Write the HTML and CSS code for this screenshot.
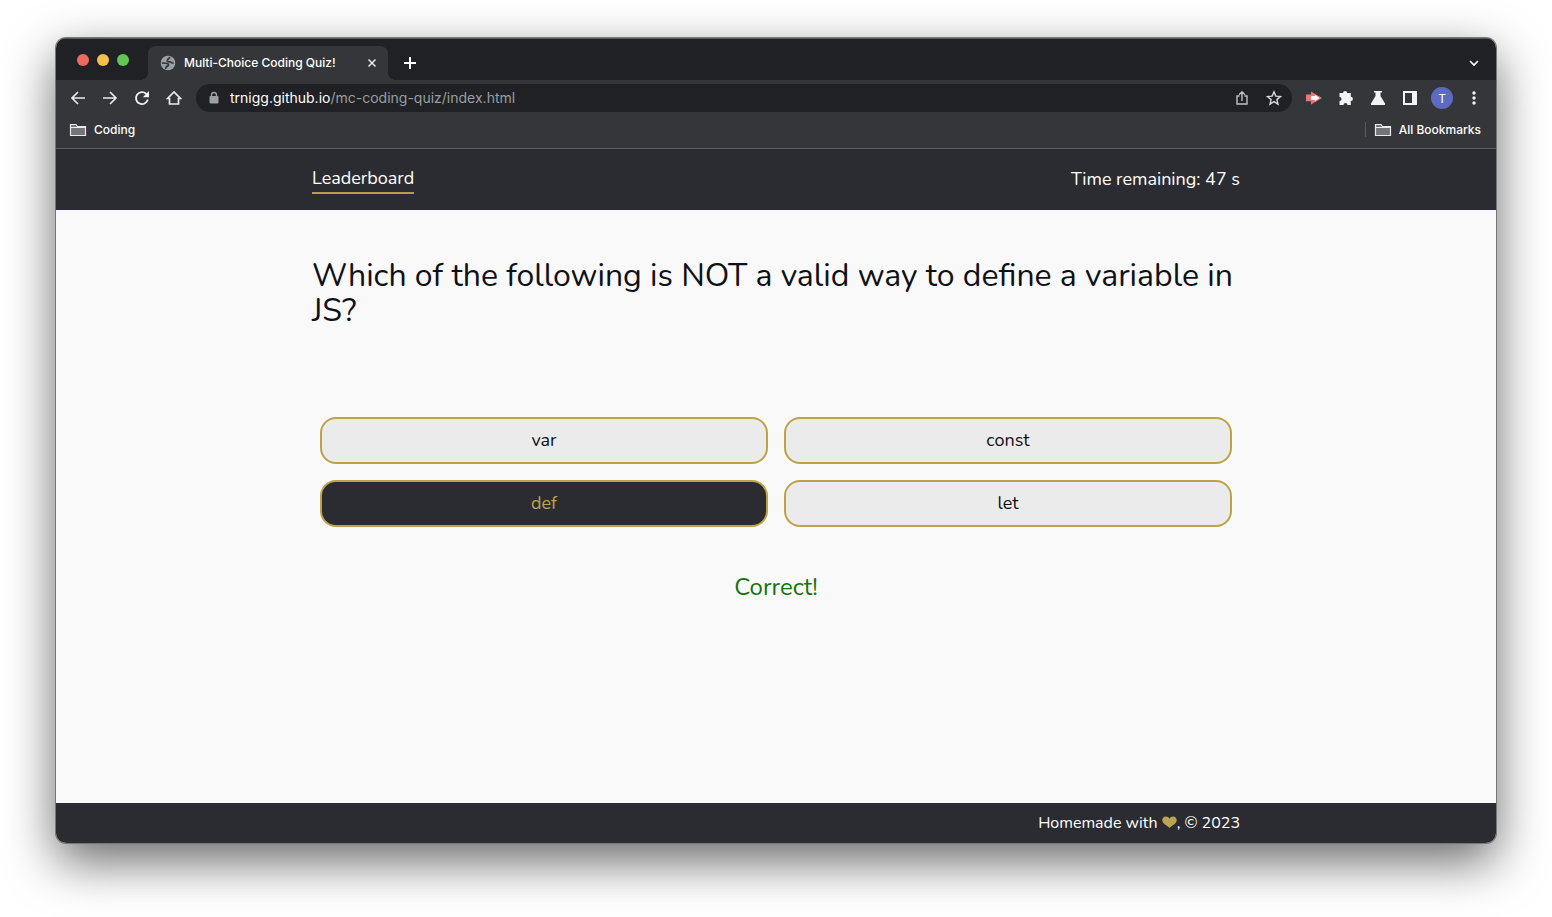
FILE: index.html
```html
<!DOCTYPE html>
<html lang="en">
<head>
<meta charset="utf-8">
<meta name="viewport" content="width=device-width, initial-scale=1">
<title>Multi-Choice Coding Quiz!</title>
<link rel="stylesheet" href="styles.css">
</head>
<body>
<div class="window">
  <div class="tabstrip">
    <div class="lights"><span class="light close"></span><span class="light minimise"></span><span class="light maximise"></span></div>
    <div class="tab">
      <svg class="globe" width="16" height="16" viewBox="0 0 16 16"><circle cx="8" cy="8" r="7.300" fill="#9aa0a6"/><path d="M9.800 1.800C9.500 4 7.800 3.500 7.300 5.200 6.800 6.600 8.500 7 9.800 6.800c1.600-.2 1.400 1.700 3.800 1.400M1.800 8.200C4 7.600 5.200 8.300 7.300 8.600c2 .4 1.200 2.400-.3 2.800-1.300.4-.6 1.600-1.800 2.400" fill="none" stroke="#35363a" stroke-width="1.700"/></svg>
      <span class="tab-title">Multi-Choice Coding Quiz!</span>
      <button class="icon-btn small" aria-label="Close tab"><svg width="16" height="16" viewBox="0 0 16 16"><path d="m4.5 4.5 7 7m0-7-7 7" stroke="#e8eaed" stroke-width="1.5"/></svg></button>
    </div>
    <button class="icon-btn new-tab" aria-label="New tab"><svg width="16" height="16" viewBox="0 0 16 16"><path d="M8 2v12M2 8h12" stroke="#fff" stroke-width="2"/></svg></button>
    <button class="icon-btn tab-search" aria-label="Search tabs"><svg width="16" height="16" viewBox="0 0 16 16"><path d="m4 6 4 4 4-4" fill="none" stroke="#fff" stroke-width="1.6"/></svg></button>
  </div>

  <div class="toolbar">
    <button class="icon-btn" aria-label="Back"><svg width="16" height="16" viewBox="0 0 16 16"><path d="M15 8H2m6-6L2 8l6 6" fill="none" stroke="#e8eaed" stroke-width="1.7"/></svg></button>
    <button class="icon-btn" aria-label="Forward"><svg width="16" height="16" viewBox="0 0 16 16"><path d="M1 8h13M8 2l6 6-6 6" fill="none" stroke="#e8eaed" stroke-width="1.7"/></svg></button>
    <button class="icon-btn" aria-label="Reload"><svg width="16" height="16" viewBox="0 0 16 16"><path d="M13.8 9.5A6 6 0 1 1 12.2 3.8L14 5.6" fill="none" stroke="#f1f3f4" stroke-width="1.8"/><path d="M15 1v6.2H8.8z" fill="#f1f3f4"/></svg></button>
    <button class="icon-btn" aria-label="Home"><svg width="16" height="16" viewBox="0 0 16 16"><path d="M1.5 8.5 8 2l6.500 6.500H12.500V14h-9V8.500z" fill="none" stroke="#e8eaed" stroke-width="1.7"/></svg></button>
    <div class="omnibox">
      <svg class="lock" width="12" height="14" viewBox="0 0 12 14"><rect x="1.500" y="5" width="9" height="7.500" rx="1" fill="#9aa0a6"/><path d="M3.500 6V4a2.500 2.500 0 0 1 5 0v2" fill="none" stroke="#9aa0a6" stroke-width="1.300"/></svg>
      <span class="url"><span class="host">trnigg.github.io</span>/mc-coding-quiz/index.html</span>
      <button class="icon-btn" aria-label="Share"><svg width="16" height="16" viewBox="0 0 16 16"><path d="M5.500 6H3v8h10V6h-2.500M8 11V2M5 4.800 8 1.800l3 3" fill="none" stroke="#bdc1c6" stroke-width="1.400"/></svg></button>
      <button class="icon-btn" aria-label="Bookmark this page"><svg width="16" height="16" viewBox="0 0 16 16"><path d="m8 1.800 1.800 4.300 4.700.400-3.600 3.100 1.100 4.600L8 11.700l-4 2.500 1.100-4.600L1.500 6.500l4.700-.400z" fill="none" stroke="#d5d7da" stroke-width="1.400"/></svg></button>
    </div>
    <div class="extensions">
      <button class="icon-btn" aria-label="Screen recorder"><svg width="16" height="16" viewBox="0 0 16 16"><path d="M0 4.500h5V1.500L16 8 5 14.500v-3.200H0z" fill="#ee7674"/><path d="M5 6h4V4.800L13.500 8 9 11.200V10H5z" fill="#fff"/></svg></button>
      <button class="icon-btn" aria-label="Extensions"><svg width="16" height="16" viewBox="0 0 16 16"><path d="M1.500 3H5a2.100 2.100 0 0 1 4.200 0h3.600v3.800a2.100 2.100 0 0 1 0 4.200v4H9.500a2 2 0 0 0-4 0h-4v-4a2 2 0 0 0 0-4z" fill="#f1f3f4"/></svg></button>
      <button class="icon-btn" aria-label="Experiments"><svg width="16" height="16" viewBox="0 0 16 16"><path d="M4 1h8v1.500h-1.500V6l4.500 7.500c.4.900 0 1.500-1 1.500H2c-1 0-1.400-.600-1-1.500L5.500 6V2.500H4z" fill="#f1f3f4"/></svg></button>
      <button class="icon-btn" aria-label="Side panel"><svg width="16" height="16" viewBox="0 0 16 16"><path d="M1 1h14v14H1zM3 3v10h7V3z" fill="#f1f3f4" fill-rule="evenodd"/></svg></button>
      <button class="avatar" aria-label="Profile T">T</button>
      <button class="icon-btn" aria-label="Menu"><svg width="16" height="16" viewBox="0 0 16 16" fill="#f1f3f4"><circle cx="8" cy="3" r="1.700"/><circle cx="8" cy="8" r="1.700"/><circle cx="8" cy="13" r="1.700"/></svg></button>
    </div>
  </div>

  <div class="bookmarks">
    <button class="bookmark"><svg width="18" height="14" viewBox="0 0 18 14"><path d="M1.500 12.500v-11H7l1.500 2h8v9h-15z" fill="#737477" stroke="#e8eaed" stroke-width="1.200"/><path d="M2 4.500h14.500" stroke="#e8eaed"/></svg>Coding</button>
    <div class="all"><button class="bookmark"><svg width="18" height="14" viewBox="0 0 18 14"><path d="M1.500 12.500v-11H7l1.500 2h8v9h-15z" fill="#737477" stroke="#e8eaed" stroke-width="1.200"/><path d="M2 4.500h14.500" stroke="#e8eaed"/></svg>All Bookmarks</button></div>
  </div>

  <header class="site-header">
    <div class="container header-row">
      <a class="leaderboard" href="#leaderboard">Leaderboard</a>
      <p class="timer">Time remaining: <span>47</span> s</p>
    </div>
  </header>
  <main class="quiz">
    <div class="container">
      <h1 class="question">Which of the following is NOT a valid way to define a variable in JS?</h1>
      <div class="answers">
        <button class="answer">var</button>
        <button class="answer">const</button>
        <button class="answer selected">def</button>
        <button class="answer">let</button>
      </div>
      <p class="result">Correct!</p>
    </div>
  </main>
  <footer class="site-footer">
    <div class="container"><p class="credit">Homemade with <svg class="heart" width="15" height="12" viewBox="0 0 15 12" role="img" aria-label="love"><path d="M7.500 12C6 9.800.300 8.200.300 4 .300 1.800 2 .500 3.800.500c1.700 0 3 .900 3.700 2.300C8.200 1.400 9.500.500 11.200.500c1.800 0 3.500 1.300 3.500 3.500 0 4.200-5.700 5.800-7.200 8z" fill="#bda453"/></svg>, © 2023</p></div>
  </footer>
</div>
</body>
</html>
```

FILE: styles.css
```css
* { box-sizing: border-box; }
body {
  margin: 0;
  padding: 38px 56px 74px;
  min-height: 100vh;
  display: flex;
  background: #fff;
  font-family: Nunito, Lato, sans-serif;
}
button { font: inherit; border: 0; padding: 0; background: none; color: inherit; }
p, h1 { margin: 0; }
svg { display: block; flex: none; }

.window {
  flex: 1;
  min-width: 0;
  display: flex;
  flex-direction: column;
  border-radius: 10px;
  overflow: hidden;
  background: #f9f9f9;
  box-shadow: 0 0 0 1px #77787a, 0 18px 50px rgba(0, 0, 0, .6);
}

.tabstrip, .toolbar, .bookmarks {
  display: flex;
  align-items: center;
  font-family: Inter, sans-serif;
  color: #fff;
}
.tabstrip { height: 42px; padding: 1px 14px 0 21px; background: #202124; box-shadow: inset 0 1px #5b5c5f; }
.lights { display: flex; gap: 8px; width: 71px; }
.light { width: 12px; height: 12px; border-radius: 50%; }
.close { background: #ed6a5f; }
.minimise { background: #f5bf4f; }
.maximise { background: #62c554; }
.tab {
  position: relative;
  align-self: flex-end;
  display: flex;
  align-items: center;
  gap: 8px;
  width: 240px;
  height: 34px;
  padding: 0 8px 0 12px;
  border-radius: 8px 8px 0 0;
  background: #35363a;
}
.tab::before, .tab::after {
  content: "";
  position: absolute;
  bottom: 0;
  width: 8px;
  height: 8px;
}
.tab::before { left: -8px; background: radial-gradient(circle at 0 0, transparent 8px, #35363a 8px); }
.tab::after { right: -8px; background: radial-gradient(circle at 100% 0, transparent 8px, #35363a 8px); }
.tab-title { flex: 1; padding-bottom: 1px; font-size: 12px; font-weight: 500; white-space: nowrap; }
.icon-btn { display: grid; place-items: center; flex: none; width: 32px; height: 28px; }
.small { width: 16px; }
.new-tab { margin: 7px 0 0 6px; }
.tab-search { margin: 7px 0 0 auto; width: 16px; }

.toolbar { height: 36px; padding: 0 6px; background: #35363a; }
.omnibox {
  flex: 1;
  display: flex;
  align-items: center;
  height: 28px;
  margin-left: 6px;
  padding: 0 2px 0 12px;
  border-radius: 14px;
  background: #202124;
}
.url { flex: 1; margin-left: 10px; padding-bottom: 1px; font-size: 14px; color: #9a9da1; }
.host { color: #fff; }
.extensions { display: flex; align-items: center; margin-left: 6px; }
.avatar {
  width: 22px;
  height: 22px;
  margin: 0 5px;
  border-radius: 50%;
  background: #5c6bc0;
  font-size: 12px;
}

.bookmarks {
  justify-content: space-between;
  height: 33px;
  padding: 0 15px 5px 13px;
  background: #35363a;
  border-bottom: 1px solid #5b5c5f;
  font-size: 12px;
  font-weight: 500;
}
.bookmark { display: flex; align-items: center; gap: 7px; }
.all { border-left: 1px solid #5b5c5f; padding-left: 8px; }

.container { width: 100%; max-width: 960px; margin: 0 auto; padding: 0 16px; }
.site-header { background: #2b2c31; color: #fff; font-size: 18px; line-height: 24px; }
.header-row { display: flex; align-items: center; justify-content: space-between; height: 61px; }
.leaderboard { color: inherit; text-decoration: none; padding-bottom: 2px; border-bottom: 2px solid #b59f46; }
.timer { padding-bottom: 2px; }

.quiz { flex: 1; background: #f9f9f9; color: #101116; }
.question { min-height: 143px; margin-top: 48px; font-size: 32px; line-height: 35px; font-weight: 400; }
.answers { display: grid; grid-template-columns: 1fr 1fr; gap: 16px; padding: 16px 8px 0; }
.answer {
  height: 47px;
  padding-bottom: 2px;
  border: 2px solid #bda247;
  border-radius: 16px;
  background: #ebebeb;
  font-size: 18px;
}
.selected { background: #2b2c31; color: #bda453; }
.result { margin-top: 44px; text-align: center; font-size: 24px; line-height: 32px; color: #12730d; }

.site-footer { background: #2b2c31; color: #fff; }
.credit { text-align: right; font-size: 16px; line-height: 40px; }
.heart { display: inline-block; vertical-align: baseline; }
```
